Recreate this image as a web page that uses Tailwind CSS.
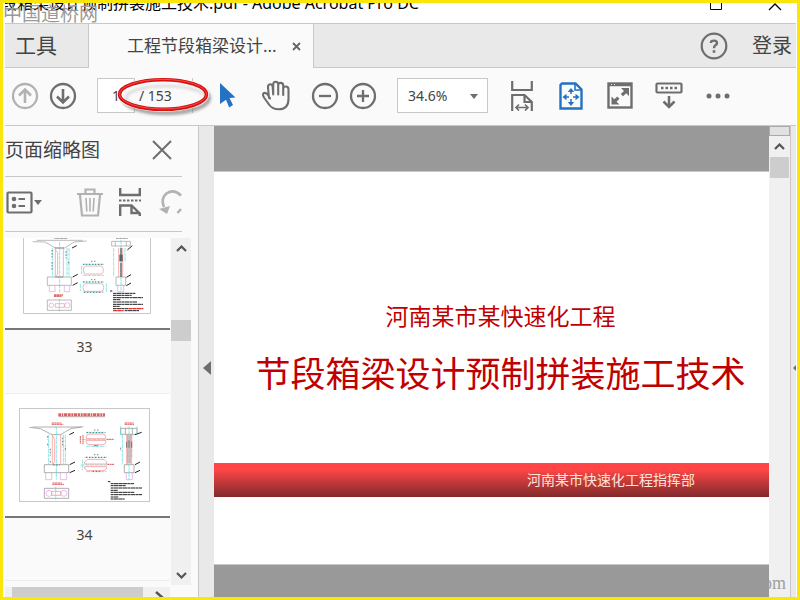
<!DOCTYPE html>
<html lang="zh-CN">
<head>
<meta charset="utf-8">
<title>段箱梁设计预制拼装施工技术.pdf - Adobe Acrobat Pro DC</title>
<script src="https://cdn.jsdelivr.net/npm/@tailwindcss/browser@4"></script>
</head>
<body class="relative flex h-screen flex-col overflow-hidden border-3 border-[#fbe60c] bg-white pr-px pl-0.5 font-['Noto_Sans','Noto_Sans_CJK_SC',sans-serif] text-[#444]">

<header class="flex h-5 shrink-0 items-center justify-between overflow-hidden">
  <h1 class="-mt-5 -ml-1 text-base leading-5 whitespace-nowrap text-black">段箱梁设计预制拼装施工技术.pdf - Adobe Acrobat Pro DC</h1>
  <div class="flex h-5 items-start">
    <button aria-label="最大化" class="flex w-[76px] justify-center"><svg width="12" height="8" viewBox="0 0 12 8" fill="none" stroke="#000"><path d="M.5 0V6.5H11.5V0"/></svg></button>
    <button aria-label="关闭" class="flex w-[42px] justify-center"><svg width="14" height="8" viewBox="0 0 14 8" fill="none" stroke="#000" stroke-width="1.3"><path d="M1 7L7 1L13 7"/></svg></button>
  </div>
</header>

<nav class="flex h-[45px] shrink-0 items-stretch border-y border-[#c8c8c8] bg-[#e9e9e9]">
  <a href="#" class="flex w-[84px] items-center border-r border-[#c8c8c8] pl-2.5 text-[21px]">工具</a>
  <div class="-mb-px flex w-[225px] items-center justify-between border-r border-[#c8c8c8] bg-[#fafafa] pr-3 pl-[38px]">
    <a href="#" class="text-[17px] whitespace-nowrap">工程节段箱梁设计...</a>
    <button aria-label="关闭标签"><svg width="9" height="9" viewBox="0 0 9 9" stroke="#666" stroke-width="1.8"><path d="M1 1L8 8M8 1L1 8"/></svg></button>
  </div>
  <div class="ml-auto flex items-center gap-6 pr-1">
    <button aria-label="帮助"><svg width="28" height="28" viewBox="0 0 28 28" fill="none" stroke="#6e6e6e"><circle cx="14" cy="14" r="12.3" stroke-width="2.2"/><path d="M11 11V10Q11.3 8.6 14 8.6Q17 8.6 17 11Q17 12.4 15.4 13.2Q14 14 14 16.2" stroke-width="2.4"/><path d="M14 18.2V20.8" stroke-width="2.6"/></svg></button>
    <a href="#" class="text-xl">登录</a>
  </div>
</nav>

<div class="flex h-[58px] shrink-0 items-center border-b border-[#c8c8c8] bg-[#fafafa] pb-0.5 pl-px" role="toolbar">
  <button aria-label="上一页" class="flex w-[38px] justify-center"><svg width="28" height="28" viewBox="0 0 28 28" fill="none" stroke="#b2b2b2" stroke-width="2.3"><circle cx="14" cy="14" r="12"/><path d="M14 21V8M8 13.5L14 7.5L20 13.5" stroke-width="2.6"/></svg></button>
  <button aria-label="下一页" class="flex w-[38px] justify-center"><svg width="28" height="28" viewBox="0 0 28 28" fill="none" stroke="#6e6e6e" stroke-width="2.3"><circle cx="14" cy="14" r="12"/><path d="M14 7V20M8 14.5L14 20.5L20 14.5" stroke-width="2.6"/></svg></button>
  <input id="page" value="1" class="ml-[15px] h-[35px] w-[38px] border border-[#c8c8c8] bg-white pl-3.5 text-sm">
  <div class="relative h-[35px] w-[77px]">
    <svg class="absolute -top-1 -left-[22px]" width="102" height="48" viewBox="0 0 102 48" fill="none">
      <defs><filter id="soft" x="-10%" y="-20%" width="120%" height="150%"><feGaussianBlur stdDeviation="1.6"/></filter></defs>
      <path d="M79.500 4V7M79.500 33V39" stroke="#c8c8c8"/>
      <ellipse cx="53" cy="24" rx="43" ry="15" stroke="#777" stroke-opacity=".7" stroke-width="4" filter="url(#soft)"/>
      <ellipse cx="50" cy="20.500" rx="43.500" ry="14.800" fill="#fafafa" stroke="#fff" stroke-width="5"/>
      <ellipse cx="53" cy="24" rx="40" ry="12" stroke="#999" stroke-opacity=".45" stroke-width="2" filter="url(#soft)"/>
      <ellipse cx="50" cy="20.500" rx="43.500" ry="14.800" stroke="#d80f0f" stroke-width="3.600"/>
      <ellipse cx="50" cy="20.200" rx="43.500" ry="14.800" stroke="#f64a4a" stroke-width="1"/>
    </svg>
    <label for="page" class="relative block pl-1 text-sm leading-[35px]">/ 153</label>
  </div>
  <button aria-label="选择工具" class="flex w-8 justify-center"><svg width="18" height="27" viewBox="0 0 18 27"><path d="M1 1L16.500 15.500L10.500 16L14 23L10.200 25.500L7 17.800L1 22Z" fill="#2372c4"/></svg></button>
  <button aria-label="抓手工具" class="ml-4 flex w-8 justify-center"><svg width="30" height="31" viewBox="0 0 30 31" fill="none" stroke="#6e6e6e" stroke-width="2.100" stroke-linecap="round" stroke-linejoin="round"><path d="M8 18L7 7.500Q6.800 4.500 9.200 4.300Q11.500 4.200 11.700 7L12.200 14.500V4.500Q12.200 1.700 14.700 1.700Q17.200 1.700 17.200 4.500V14.500V5.500Q17.200 2.900 19.700 2.900Q22.200 2.900 22.200 5.500V15V9Q22.200 6.500 24.800 6.500Q27.500 6.500 27.500 9.500V19Q27.500 29.300 17.500 29.300Q11.500 29.300 8 24.500L3 17.500Q1 14.200 3 13Q5.200 12.200 7 15L9 18.500"/></svg></button>
  <button aria-label="缩小" class="ml-3.5 flex w-[38px] justify-center"><svg width="28" height="28" viewBox="0 0 28 28" fill="none" stroke="#6e6e6e" stroke-width="2.300"><circle cx="14" cy="14" r="12"/><path d="M8 14H20"/></svg></button>
  <button aria-label="放大" class="flex w-[38px] justify-center"><svg width="28" height="28" viewBox="0 0 28 28" fill="none" stroke="#6e6e6e" stroke-width="2.300"><circle cx="14" cy="14" r="12"/><path d="M8 14H20M14 8V20"/></svg></button>
  <div class="relative ml-[15px] h-[35px] w-[91px]">
    <select aria-label="缩放比例" class="h-full w-full appearance-none border border-[#c8c8c8] bg-white pl-2.5 text-sm"><option>34.6%</option></select>
    <svg class="pointer-events-none absolute top-4 right-2.5" width="8" height="5" viewBox="0 0 8 5"><path d="M0 0H8L4 5Z" fill="#6e6e6e"/></svg>
  </div>
  <button aria-label="适合宽度" class="ml-[9px] flex w-[49px] justify-center"><svg width="22" height="30" viewBox="0 0 22 30" fill="none" stroke="#6e6e6e" stroke-width="2.200"><path d="M1.200 0V9H20.800V0M1.200 30V14H13.500L20.800 21V30M13.500 14V21H20.500"/><path d="M5 26.500H17M8 23.500L5 26.500L8 29.500M14 23.500L17 26.500L14 29.500" stroke-width="1.700"/></svg></button>
  <button aria-label="适合页面" class="flex w-[49px] justify-center"><svg width="24" height="28" viewBox="0 0 24 28" fill="none" stroke="#2372c4" stroke-width="2.400"><path d="M3 1.500H16.500L22.500 7.500V26.500H1.500V3Z"/><path d="M16 1.500V8H22.500" stroke-width="1.600"/><path d="M12 8V12M12 17V22M5 15H10M14 15H19" stroke-width="1.500"/><path d="M12 6L15.200 10H8.800ZM12 24L15.200 20H8.800ZM3.500 15L7.500 11.800V18.200ZM20.500 15L16.500 11.800V18.200Z" fill="#2372c4" stroke="none"/></svg></button>
  <button aria-label="全屏模式" class="flex w-[49px] justify-center"><svg width="26" height="27" viewBox="0 0 26 27" fill="none" stroke="#6e6e6e" stroke-width="2.400"><rect x="1.500" y="1.500" width="23" height="24"/><path d="M1 3H25" stroke-width="2.500"/><path d="M4 2.500H5M7 2.500H8" stroke="#ddd" stroke-width="1"/><path d="M22 6V14L19.200 11.200L16 14.200L13.800 12L17 9L14 6ZM4.500 22.500V14.500L7.300 17.300L10.300 14.500L12.500 16.700L9.500 19.700L12.500 22.500Z" fill="#6e6e6e" stroke="none"/></svg></button>
  <button aria-label="阅读模式" class="flex w-[49px] justify-center"><svg width="28" height="27" viewBox="0 0 28 27" fill="none" stroke="#6e6e6e" stroke-width="2.200"><rect x="1.500" y="1.500" width="25" height="9" rx="1"/><path d="M6 6H22" stroke-width="2.600" stroke-dasharray="2.500 2"/><path d="M14 14V25M8.500 19.500L14 25L19.500 19.500" stroke-width="2.500"/></svg></button>
  <button aria-label="更多工具" class="flex w-[49px] justify-center"><svg width="24" height="6" viewBox="0 0 24 6" fill="#6e6e6e"><circle cx="3" cy="3" r="2.500"/><circle cx="12" cy="3" r="2.500"/><circle cx="21" cy="3" r="2.500"/></svg></button>
</div>

<div class="flex min-h-0 flex-1">
  <aside class="flex w-[194px] shrink-0 flex-col border-r border-[#c8c8c8] bg-[#fafafa]">
    <div class="mr-4 flex h-[51px] shrink-0 items-center justify-between border-b border-[#c8c8c8] pr-2.5 pb-0.5">
      <h2 class="text-[19px] whitespace-nowrap">页面缩略图</h2>
      <button aria-label="关闭面板"><svg width="20" height="20" viewBox="0 0 20 20" stroke="#6e6e6e" stroke-width="2"><path d="M1 1L19 19M19 1L1 19"/></svg></button>
    </div>
    <div class="mr-4 flex h-[55px] shrink-0 items-center overflow-hidden border-b border-[#c8c8c8] pb-1 pl-px">
      <button aria-label="选项"><svg width="36" height="23" viewBox="0 0 36 23" fill="none" stroke="#6e6e6e" stroke-width="2.200"><rect x="1.500" y="1.500" width="24" height="20" rx="1"/><circle cx="8" cy="8" r="2.300" fill="#6e6e6e" stroke="none"/><circle cx="8" cy="15" r="2.300" fill="#6e6e6e" stroke="none"/><path d="M12.500 8H19M12.500 15H19" stroke-width="2"/><path d="M28 9H36L32 14Z" fill="#6e6e6e" stroke="none"/></svg></button>
      <span class="ml-3.5 h-[35px] w-px bg-[#c8c8c8]"></span>
      <button aria-label="删除页面" class="ml-[21px] shrink-0"><svg width="26" height="29" viewBox="0 0 26 29" fill="none" stroke="#b2b2b2" stroke-width="2.200"><path d="M0 6H26M8.500 6V1.500H17.500V6M3 7L5 27.500H21L23 7"/><path d="M9 10L9.800 23.500M13 10V23.500M17 10L16.200 23.500" stroke-width="1.600"/></svg></button>
      <button aria-label="拆分页面" class="ml-4 shrink-0"><svg width="22" height="28" viewBox="0 0 22 28" fill="none" stroke="#6e6e6e" stroke-width="2.400"><path d="M1.200 0V7H20.800V0M1.200 28V17.500H12.500L20.800 25.500V28M12.500 17.500V25H20.500"/><path d="M0 12.500H22" stroke-width="2" stroke-dasharray="2.500 1.500"/></svg></button>
      <button aria-label="旋转页面" class="ml-[18px] shrink-0"><svg width="25" height="26" viewBox="0 0 25 26" fill="none" stroke="#b2b2b2" stroke-width="2.600"><path d="M5 18Q1.500 9.500 7.500 4.500Q15 -0.500 22 6.500M22 20L18.500 24"/><path d="M0 20L11 17L8 25Z" fill="#b2b2b2" stroke="none"/></svg></button>
    </div>
    <div class="flex min-h-0 flex-1 pt-1.5">
      <div class="flex w-[165px] flex-col overflow-hidden text-center text-sm">
        <figure class="flex h-[156px] shrink-0 flex-col border-b border-[#eee]">
          <div class="h-[92px] border-b-2 border-[#777] bg-white pl-[18px]">
            <svg width="128" height="76" viewBox="69 24 384 228" fill="none" stroke-width="2">
              <path d="M70.500 24V250.500H451.500V24" stroke="#c8c8c8" stroke-width="3"/>
              <path d="M98 35L135 36L166 54H194L222 36L260 33M110 31H248M142 141H214V166H142ZM335 34H391V48H335ZM346 34V48M379 34V48M348 141H377V166H348ZM142 210H214V241H142Z" stroke="#999"/>
              <path d="M163 25H203M348 25H383M165 54H192M166 141H190" stroke="#444" stroke-dasharray="3 1"/>
              <path d="M216 54L230 47M218 141L233 133M218 166L233 158M382 60L397 47M379 142L393 134M379 167L393 159" stroke="#222" stroke-width="3"/>
              <path d="M179 36V190M201 54V140M207 54V140M158 54V140M341 54V140M375 54V95M248 103H312M248 136H312M248 156H312M248 186H312M245 108V132M241 162V184M319 160V186M363 30V185M178 206V244" stroke="#50dce0" stroke-dasharray="12 2"/>
              <path d="M166 54V141M190 54V141M167 60L173 68V133L167 141M356 54V141M368 54V141" stroke="#f18b8b"/>
              <path d="M363 54V94M360 74V94M366 74V94M363 98V141" stroke="#333" stroke-width="3"/>
              <path d="M156 60V82M156 96V123M198 64V85M206 95V102" stroke="#444" stroke-dasharray="5 4"/>
              <path d="M257 108H303Q310 108 310 120Q310 132 303 132H257Q250 132 250 120Q250 108 257 108M256 161H304Q311 161 311 172Q311 184 304 184H256Q249 184 249 172Q249 161 256 161M166 221H193V232H166Z" stroke="#ef9292"/>
              <path d="M273 94H290M273 149H290M249 103H310M249 156H310M252 187H307" stroke="#333" stroke-dasharray="4 5" stroke-width="2"/>
              <path d="M148 166V185H165V166M193 166V185H209V166M353 166V185H371V166" stroke="#e199e9"/><circle cx="154" cy="226" r="7" stroke="#e199e9"/><circle cx="202" cy="226" r="8" stroke="#e199e9"/>
              <path d="M162 195H189M162 199H186" stroke="#e56b6b" stroke-width="4" stroke-dasharray="7 1"/>
              <path d="M330 183H337M339 190H406M339 196H395M339 203H429M339 209H361M339 216H411M339 223H429M339 229H359M339 236H384M374 242H417" stroke="#222" stroke-width="3" stroke-dasharray="9 1 14 1"/>
              <path d="M385 236H430M339 242H371" stroke="#e52b2b" stroke-width="4" stroke-dasharray="12 1"/>
            </svg>
          </div>
          <figcaption class="pr-1.5 leading-[34px]">33</figcaption>
        </figure>
        <figure class="flex h-[187px] shrink-0 flex-col border-b border-[#eee]">
          <div class="h-[124px] border-b-2 border-[#777] bg-white pt-3.5 pl-3.5">
            <svg width="131" height="94" viewBox="57 69 393 282" fill="none" stroke-width="2">
              <rect x="58.500" y="70.500" width="390" height="279" stroke="#c8c8c8" stroke-width="3"/>
              <path d="M175 89H315" stroke="#e06060" stroke-width="8" stroke-dasharray="8 2 5 2 10 2"/><path d="M175 95H315" stroke="#a66"/>
              <path d="M88 127L121 131L156 149H182L212 131L250 125M98 126H244M133 239H206V263H133ZM362 130H411V148H362ZM376 130V148M397 130V148M373 239H402V263H373ZM133 310H206V340H133Z" stroke="#888"/>
              <path d="M155 114H184M155 118H190M374 114H401M374 118H402M157 294H186M157 298H192" stroke="#e56060" stroke-width="3" stroke-dasharray="7 1"/>
              <path d="M208 149L222 142M209 239L225 231M209 263L225 256M405 149L425 142M405 239L420 231M405 263L420 256" stroke="#222" stroke-width="3"/>
              <path d="M169 124V284M190 149V238M196 149V238M146 149V238M367 149V238M395 149V216M411 124V150M362 124V150M387 124V284M258 142H317M258 184H317M253 217H322M248 164H322M242 240H322M258 260H320M248 224V256M167 306V344" stroke="#50dce0" stroke-dasharray="12 2"/>
              <path d="M157 149V239M182 149V239M158 153L164 163V230L158 239M380 149V239M395 149V239" stroke="#f18b8b"/>
              <path d="M387 149V236M383 149V236M391 149V236" stroke="#b77" stroke-width="2"/><path d="M380 170V188M395 170V188M387 166V188" stroke="#444"/>
              <path d="M143 153V163M143 176V183M151 191V212M188 158V181M196 189V196M362 188V198M151 228V235" stroke="#444" stroke-dasharray="5 4"/>
              <path d="M259 161V155Q259 147 270 147H307Q317 147 317 155V161ZM259 166V172Q259 179 270 179H307Q317 179 317 172V166ZM254 237V231L263 223H312L320 231V237ZM254 245V251L263 257H312L320 251V245ZM155 319H182V331H155Z" stroke="#ef8585"/>
              <path d="M320 163H342M322 238H342M282 182H294M241 153V176" stroke="#d55" stroke-width="3" stroke-dasharray="6 1"/><path d="M249 150V178" stroke="#d55" stroke-width="3" stroke-dasharray="5 1"/>
              <path d="M282 135H300M282 209H300M260 143H316M258 217H320M278 259H300M160 240H180" stroke="#333" stroke-width="2" stroke-dasharray="4 5"/>
              <path d="M137 263V284H155V263M181 263V284H200V263M379 263V284H397V263" stroke="#e199e9"/><circle cx="147" cy="325" r="9" stroke="#e199e9"/><circle cx="192" cy="325" r="9" stroke="#e199e9"/>
              <path d="M324 290H331M332 296H402M332 302H377M332 309H426M332 316H353M332 322H403M332 329H426M332 336H355M332 342H374" stroke="#222" stroke-width="3" stroke-dasharray="9 1 14 1"/>
            </svg>
          </div>
          <figcaption class="pr-1.5 leading-[34px]">34</figcaption>
        </figure>
        <div class="mt-1.5 flex min-h-0 flex-1 bg-[#f0f0f0] pl-[7px]">
          <div class="w-[131px] bg-[#cdcdcd]"></div>
          <svg class="ml-3" width="10" height="10" viewBox="0 0 10 10" fill="none" stroke="#555" stroke-width="2.500"><path d="M1 5L8 11"/></svg>
        </div>
      </div>
      <div class="mb-3 ml-px flex w-5 flex-col items-center bg-[#f0f0f0] pt-[7px] pb-1.5">
        <svg width="11" height="7" viewBox="0 0 11 7" fill="none" stroke="#555" stroke-width="2.200"><path d="M1 6L5.500 1.500L10 6"/></svg>
        <div class="mt-[68px] h-[21px] w-full bg-[#cdcdcd]"></div>
        <svg class="mt-auto" width="11" height="7" viewBox="0 0 11 7" fill="none" stroke="#555" stroke-width="2.200"><path d="M1 1L5.500 5.500L10 1"/></svg>
      </div>
    </div>
  </aside>

  <button aria-label="折叠导航窗格" class="flex w-[15px] shrink-0 items-center justify-center bg-[#e9e9e9] pt-3"><svg width="8" height="14" viewBox="0 0 8 14"><path d="M8 0V14L0 7Z" fill="#6e6e6e"/></svg></button>

  <main class="flex min-w-0 flex-1 flex-col bg-[#999] pt-[45px] pb-8">
    <article class="flex flex-1 flex-col border-y border-[#c8c8c8] bg-white text-center text-[#c00000]">
      <p class="mt-[126px] pl-[18px] text-[23px] leading-9">河南某市某快速化工程</p>
      <h2 class="mt-[15px] pl-[18px] text-[35px] leading-[50px] whitespace-nowrap">节段箱梁设计预制拼装施工技术</h2>
      <p class="mt-16 h-[34px] bg-linear-to-b from-[#ff4545] from-20% to-[#80292b] pr-[74px] text-right font-['Noto_Sans_CJK_SC',sans-serif] text-sm leading-8 text-[#ffe4dc]">河南某市快速化工程指挥部</p>
    </article>
  </main>

  <div class="flex w-[21px] shrink-0 flex-col bg-[#f0f0f0]">
    <div class="h-2.5 border border-[#aaa] bg-[#e1e1e1]"></div>
    <svg class="my-[7px] ml-[5px]" width="11" height="7" viewBox="0 0 11 7" fill="none" stroke="#555" stroke-width="2.200"><path d="M1 6L5.500 1.500L10 6"/></svg>
    <div class="mx-px h-[21px] bg-[#cdcdcd]"></div>
    <div class="mt-auto flex h-7 justify-end overflow-hidden pr-1 font-['Liberation_Serif',serif] text-lg leading-7 text-[#a0a0a0]">om</div>
  </div>
  <button aria-label="展开工具窗格" class="flex w-1.5 shrink-0 items-center justify-end border-l border-[#c8c8c8] bg-[#e9e9e9] pt-3"><svg width="3" height="6" viewBox="0 0 3 6"><path d="M3 0V6L0 3Z" fill="#6e6e6e"/></svg></button>
</div>

<div class="pointer-events-none absolute -top-0.5 left-0 font-['Liberation_Serif','Noto_Sans_CJK_SC',serif] text-[19px] leading-7 whitespace-nowrap text-[#999]">中国道桥网</div>
</body>
</html>
